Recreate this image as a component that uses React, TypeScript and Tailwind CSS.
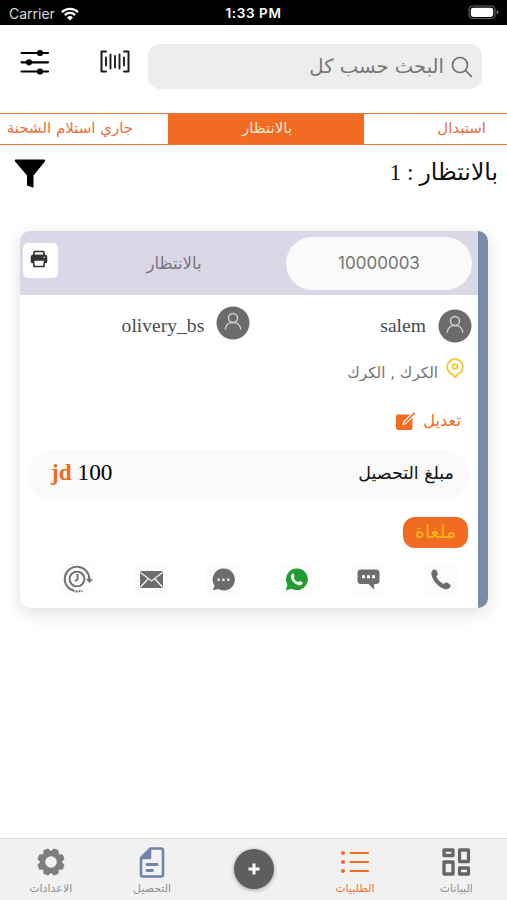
import type { ReactNode } from 'react';

function StatusBar() {
  return (
    <div className="h-[25px] bg-black text-white flex items-center px-[9px] font-['Inter','Liberation_Sans',sans-serif]">
      <div className="flex-1 flex items-center gap-[6px] pt-[2px]">
        <span className="text-[14px] leading-none text-[#d8d8d8]">Carrier</span>
        <svg width="18" height="14" viewBox="0 0 18 14" fill="none" stroke="#fff" strokeWidth="2.2">
          <path d="M.9 5.1a11.6 11.6 0 0 1 16.2 0" />
          <path d="M3.8 8.1a7.4 7.4 0 0 1 10.4 0" />
          <path d="M9 13.6 6 10.5a4.3 4.3 0 0 1 6 0z" fill="#fff" stroke="none" />
        </svg>
      </div>
      <span className="text-[13.5px] leading-none font-semibold tracking-[0.6px] pt-[3px]">1:33 PM</span>
      <div className="flex-1 flex justify-end">
        <svg width="31" height="15" viewBox="0 0 31 15" className="-mr-px">
          <rect x="1" y="1" width="26" height="12.5" rx="3.8" fill="none" stroke="#666" strokeWidth="1.2" />
          <rect x="2.8" y="2.7" width="22.4" height="9.2" rx="2.3" fill="#fff" />
          <path d="M28.6 5v4.6q1.7-.8 1.7-2.3T28.6 5" fill="#777" />
        </svg>
      </div>
    </div>
  );
}

function Header() {
  return (
    <div className="h-[88px] flex items-start pl-[20px] pr-[25px] pt-[19px]">
      <svg className="mt-[4px]" width="30" height="28" viewBox="0 0 30 28" stroke="#000" strokeWidth="2.2" strokeLinecap="round">
        <path d="M1.5 5h26.500M1.5 14.300h26.500M1.5 23.500h26.500" />
        <circle cx="20" cy="5" r="2" />
        <circle cx="9" cy="14.300" r="2" />
        <circle cx="20" cy="23.500" r="2" />
      </svg>
      <svg className="mt-[6px] ml-[50px]" width="30" height="24" viewBox="0 0 30 24" fill="none" stroke="#1c1c1c" strokeWidth="2" strokeLinecap="round" strokeLinejoin="round">
        <path d="M6 1.500H1.500v20H6M24 1.500h4.500v20H24" />
        <path d="M6 7.500v8M10.500 4.500v14M15 6v11.500M19.500 4.500v14M24 7.500v8" strokeWidth="1.900" />
      </svg>
      <div className="ml-[18px] flex-1 h-[45px] rounded-[12px] bg-[#ededed] flex items-center justify-end gap-[7px] pr-[9px]">
        <span dir="rtl" className="text-[19.6px] leading-none text-[#787878] whitespace-nowrap">البحث حسب كل</span>
        <svg width="22" height="22" viewBox="0 0 22 22" fill="none" stroke="#707070" strokeWidth="1.700" strokeLinecap="round">
          <circle cx="9" cy="9" r="7.500" />
          <path d="m14.500 14.500 6 6" />
        </svg>
      </div>
    </div>
  );
}

function Tabs() {
  return (
    <div className="h-[32px] border-y border-[#f0763c] flex text-[15px] leading-[29px] text-[#e8703c] whitespace-nowrap" dir="rtl">
      <div className="w-[143px] pr-[21px]">استبدال</div>
      <div className="w-[196px] bg-[#f26b23] text-[#fde3d5] text-center pl-[2px]">بالانتظار</div>
      <div className="w-[168px] pr-[35px]">جاري استلام الشحنة</div>
    </div>
  );
}

function Avatar({ className = '' }: { className?: string }) {
  return (
    <svg className={className} width="34" height="34" viewBox="0 0 34 34" fill="none" stroke="#d0d0d0" strokeWidth="1.500" strokeLinecap="round">
      <circle cx="17" cy="17" r="16.500" fill="#6b6b6b" stroke="none" />
      <circle cx="17" cy="12" r="4.500" />
      <path d="M9.300 23c.3-4 3.600-6.500 7.700-6.500s7.400 2.500 7.700 6.500" />
    </svg>
  );
}

function ActionIcon({ children }: { children: ReactNode }) {
  return <div className="size-[34px] rounded-[8px] bg-[#fcfcfc] flex items-center justify-center">{children}</div>;
}

function Actions() {
  return (
    <div className="h-[34px] mt-[14px] pl-[41px] pr-[20px] flex justify-between text-[#6d6d6d]">
      <ActionIcon>
        <svg width="30" height="28" viewBox="0 0 30 28" fill="none" stroke="currentColor" strokeWidth="1.900">
          <path d="M11.500 26A12.300 12.300 0 1 1 26.300 14" />
          <path d="M12.500 26.500h2M15.500 26.300h2M18.500 26h1" />
          <path d="M23 14h7l-3.500 4z" fill="currentColor" stroke="none" />
          <circle cx="14" cy="14" r="7.400" />
          <path d="M14.500 9v5.500L12 16" />
        </svg>
      </ActionIcon>
      <ActionIcon>
        <svg width="23" height="17" viewBox="0 0 23 17" className="ml-[2px]">
          <rect width="23" height="17" rx="1.500" fill="currentColor" />
          <path d="m.5 1.500 11 8.500 11-8.500M.5 16l7.500-8M22.500 16 15 8" fill="none" stroke="#f4f4f4" strokeWidth="1.300" />
        </svg>
      </ActionIcon>
      <ActionIcon>
        <svg width="23" height="23" viewBox="0 0 23 23">
          <path d="M11.700.5a11 11 0 1 1-5.200 20.600l-5.700 1.100 1.800-4.500A11 11 0 0 1 11.700.5" fill="currentColor" />
          <path d="M5.500 10.600h2.300v2.300H5.500zm4.800 0h2.300v2.300h-2.300zm4.900 0h2.300v2.300h-2.300z" fill="#eee" />
        </svg>
      </ActionIcon>
      <ActionIcon>
        <svg width="23" height="23" viewBox="0 0 23 23" className="ml-px">
          <path d="M12 .5a10.800 10.800 0 1 1-5.300 20.200L.8 22.200l1.700-5.500A10.800 10.800 0 0 1 12 .5" fill="#1f9d31" />
          <path d="M7.200 5.700c.5-.4 1.300-.3 1.500.2l1 2.400c.1.400-.8 1.100-.9 1.600.9 1.900 2.400 3.300 4.300 4.200.6 0 1.400-1.300 1.800-1.200l2.600 1.300c.4.200.3 1.100 0 1.600-.8 1.400-2.700 1.900-4.100 1.500-3.700-1.100-6.600-4-7.400-7.500-.3-1.500.1-3.200 1.200-4.100" fill="#fff" />
        </svg>
      </ActionIcon>
      <ActionIcon>
        <svg width="23" height="21" viewBox="0 0 23 21">
          <path d="M4 .5h15a3.500 3.500 0 0 1 3.500 3.500v7.500A3.500 3.500 0 0 1 19 15h-1.800v5.500L11.500 15H4A3.500 3.500 0 0 1 .5 11.500V4A3.500 3.500 0 0 1 4 .5" fill="currentColor" />
          <path d="M5 6.200h3v3H5zm5 0h3v3h-3zm5 0h3v3h-3z" fill="#fff" />
        </svg>
      </ActionIcon>
      <ActionIcon>
        <svg width="20" height="21" viewBox="0 0 20 21" fill="currentColor">
          <path d="M2 1C3 .1 4.600.2 5.300 1.300l1.500 3c.4.900-.1 1.900-.9 2.400-.5.400-.4 1-.1 1.600 1.400 2.700 3.400 4.900 6 6.200.7.300 1.300.3 1.700-.3.600-.8 1.600-1 2.500-.6l2.800 1.600c1 .7 1.100 2.100.3 3.100-1.300 1.700-3.600 2.500-5.700 1.700C7 17.600 2.300 12.500.5 6 0 4.100.5 2.300 2 1" />
        </svg>
      </ActionIcon>
    </div>
  );
}

function OrderCard() {
  return (
    <div className="mx-[20px] w-[468px] h-[377px] mt-[31px] rounded-[10px] overflow-hidden bg-white shadow-[0_5px_18px_rgba(0,0,0,0.13)] border-r-[10px] border-[#7a8ba9]">
      <div className="h-[64px] bg-[#dad7e7] flex items-center pl-[3px] pr-[6px]">
        <div className="size-[35px] rounded-[5px] bg-white flex items-center justify-center -mt-[5px]">
          <svg width="18" height="18" viewBox="0 0 18 18" className="-ml-[3px] -mt-[3px]">
            <path d="M4.500 1.500h9l1 4h-11z" fill="#fff" stroke="#333" strokeWidth="1.700" strokeLinejoin="round" />
            <path d="M3 4.800h12a2.300 2.300 0 0 1 2.300 2.300v4.400a1.500 1.500 0 0 1-1.500 1.500H2.200a1.500 1.500 0 0 1-1.500-1.500V7.100A2.300 2.300 0 0 1 3 4.800" fill="#333" />
            <path d="M3.300 10h11.400l-.7 6.500H4z" fill="#fff" stroke="#333" strokeWidth="1.700" strokeLinejoin="round" />
            <path d="M13.500 7.200H15" stroke="#fff" />
          </svg>
        </div>
        <span dir="rtl" className="flex-1 text-center text-[16.500px] leading-none text-[#77737f] pl-[4px] pt-[2px]">بالانتظار</span>
        <div className="w-[186px] h-[53px] rounded-full bg-[#fafafa] flex items-center justify-center text-[17px] text-[#747474] pt-px font-['Inter','Liberation_Sans',sans-serif]">
          10000003
        </div>
      </div>

      <div className="h-[51px] pt-[10px] flex justify-end pr-[6px] text-[19.6px] leading-[42px] text-[#494b52] font-['Liberation_Serif',serif]">
        <span>olivery_bs</span>
        <Avatar className="ml-[12px] mt-px" />
        <span className="ml-[130px]">salem</span>
        <Avatar className="ml-[12px] mt-[4px]" />
      </div>

      <div className="h-[48px] pt-[11px] flex justify-end pr-[14px] text-[#747474]">
        <span dir="rtl" className="text-[15.2px] leading-[33px]">الكرك , الكرك</span>
        <svg className="ml-[8px] mt-px" width="18" height="21" viewBox="0 0 18 21" fill="none" stroke="#f7c531" strokeWidth="1.800" strokeLinejoin="round">
          <path d="M9 19.500 6.200 16.200A7.800 7.800 0 1 1 11.800 16.200z" />
          <circle cx="9" cy="8.600" r="2.300" />
        </svg>
      </div>

      <div className="h-[54px] flex items-center justify-end pr-[17px] gap-[7px] text-[#f26b23]">
        <svg width="21" height="20" viewBox="0 0 21 20">
          <rect x="1" y="3.500" width="16.500" height="15.500" rx="2" fill="#f26b23" />
          <path d="m8 13.500 1-3L17.500 2l2 1.800L11 12.400z" fill="#f26b23" stroke="#fff" strokeWidth="1.100" strokeLinejoin="round" />
          <path d="m17.500 2.500 1-1.300 2 1.600-1.300 1.300z" fill="#f26b23" />
        </svg>
        <span dir="rtl" className="text-[16.3px] leading-none">تعديل</span>
      </div>

      <div className="h-[50px] mt-[2px] ml-[7px] mr-[8px] rounded-full bg-[#fafafa] flex items-center justify-between pl-[24px] pr-[16px]">
        <span className="text-[23.3px] leading-none font-['Liberation_Serif',serif] -mt-[4px]">
          <b className="text-[#f26b23]">jd</b> 100
        </span>
        <span dir="rtl" className="text-[17.500px] leading-none text-[#111] -mt-[3px]">مبلغ التحصيل</span>
      </div>

      <div className="mt-[17px] flex justify-end pr-[10px]">
        <div dir="rtl" className="w-[65px] h-[31px] rounded-[12px] bg-[#f26b23] text-[#fcb812] text-[18.8px] leading-[30px] text-center">ملغاة</div>
      </div>

      <Actions />
    </div>
  );
}

function NavItem({ label, className, children }: { label: string; className: string; children: ReactNode }) {
  return (
    <div className={`w-[101.4px] flex flex-col items-center pt-[8px] ${className}`}>
      <div className="h-[31px] flex items-center">{children}</div>
      <span dir="rtl" className="text-[11px] leading-[16px] mt-[3px]">{label}</span>
    </div>
  );
}

function BottomNav() {
  return (
    <div className="h-[62px] border-t border-[#dedede] bg-[#f2f1f2] flex">
      <NavItem label="الاعدادات" className="text-[#8f8f8f]">
        <svg width="28" height="28" viewBox="0 0 28 28" className="-mt-[2px]">
          <g fill="#7e7e7e">
            <circle cx="14" cy="14" r="11.200" />
            {[0, 45, 90, 135, 180, 225, 270, 315].map((deg) => (
              <path key={deg} d="M9.800 5 11 1.200q.3-.9 1.200-.9h3.600q.9 0 1.200.9L18.200 5z" transform={`rotate(${deg + 22.5} 14 14)`} />
            ))}
          </g>
          <circle cx="14" cy="14" r="5.800" fill="#f2f1f2" />
        </svg>
      </NavItem>
      <NavItem label="التحصيل" className="text-[#8f8f8f]">
        <svg width="26" height="31" viewBox="0 0 26 31" fill="none" stroke="#7184aa" strokeWidth="2.600" strokeLinejoin="round" strokeLinecap="round">
          <path d="M11.500 1.500H22A2 2 0 0 1 24 3.500v24a2 2 0 0 1-2 2H4a2 2 0 0 1-2-2V11z" />
          <path d="M11.500 2v9.500H2.500z" fill="#7184aa" strokeWidth="1.500" />
          <path d="M8 17.500h10M8 23.500h5.500" strokeWidth="2.800" />
        </svg>
      </NavItem>
      <div className="w-[101.4px] flex justify-center pt-[10px] pl-[2px]">
        <div className="size-[40px] rounded-full bg-[#5e5e5e] shadow-[0_1px_4px_rgba(0,0,0,0.35)] flex items-center justify-center">
          <svg width="12" height="12" viewBox="0 0 12 12" stroke="#fff" strokeWidth="3">
            <path d="M6 .5v11M.5 6h11" />
          </svg>
        </div>
      </div>
      <NavItem label="الطلبيات" className="text-[#f0763c]">
        <svg width="30" height="24" viewBox="0 0 30 24" stroke="#f26b23" strokeWidth="2.200" strokeLinecap="round" className="-mt-[2px]">
          <path d="M10.500 3H28M10.500 12H28M10.500 21H28" />
          <path d="M3 3h.01M3 12h.01M3 21h.01" strokeWidth="4" />
        </svg>
      </NavItem>
      <NavItem label="البيانات" className="text-[#8f8f8f]">
        <svg width="29" height="29" viewBox="0 0 29 29" fill="none" stroke="#656565" strokeWidth="3.300" strokeLinejoin="round">
          <rect x="2" y="2" width="9" height="5.500" />
          <rect x="17.500" y="2" width="9" height="11.500" />
          <rect x="2" y="14" width="9" height="12" />
          <rect x="17.500" y="20" width="9" height="6" />
        </svg>
      </NavItem>
    </div>
  );
}

export default function App() {
  return (
    <div className="w-[507px] h-[900px] bg-white overflow-hidden flex flex-col font-['DejaVu_Sans',sans-serif]">
      <StatusBar />
      <Header />
      <Tabs />
      <div className="h-[55px] flex items-center justify-between pl-[14px] pr-[9px]">
        <svg width="32" height="30" viewBox="0 0 32 30" className="mb-[-3px]">
          <path d="M1.500.5h29q1.200.9 0 2.500L19.500 16.500v12.300L13 26.500v-10L1.500 3Q-.2 1.400 1.500.5" />
        </svg>
        <div dir="rtl" className="text-[23.5px] leading-none text-[#111] font-['Liberation_Serif','DejaVu_Sans',serif]">بالانتظار : 1</div>
      </div>
      <OrderCard />
      <div className="flex-1" />
      <BottomNav />
    </div>
  );
}
